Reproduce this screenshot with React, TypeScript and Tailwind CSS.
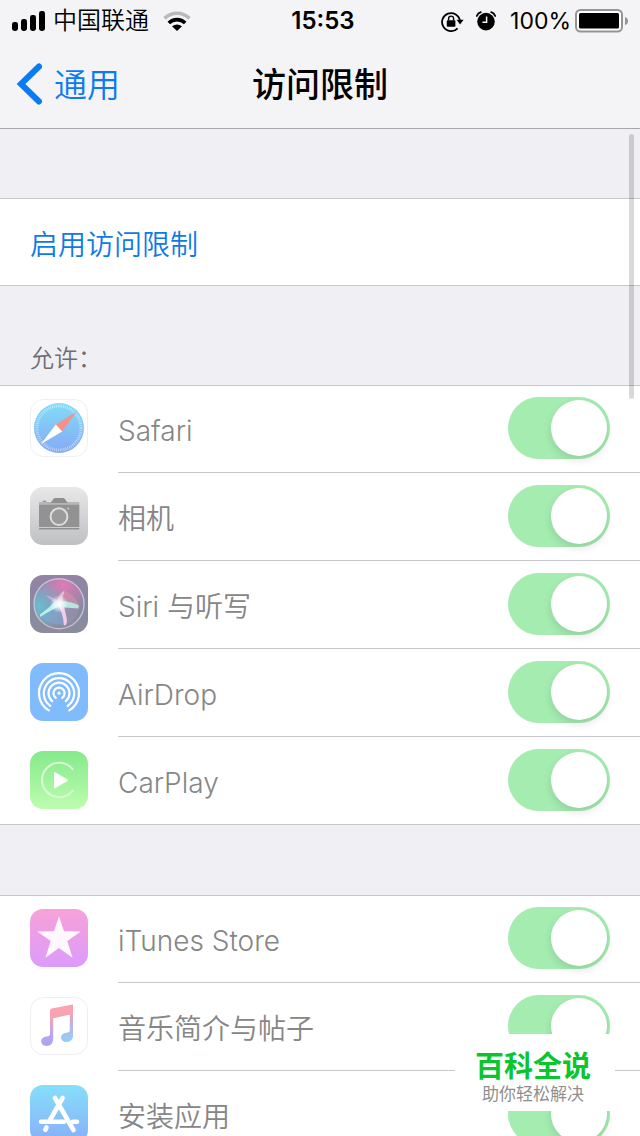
import React from 'react';

interface SettingItem {
  id: string;
  label: string;
  icon: React.ReactNode;
}

const SafariIcon = () => (
  <svg viewBox="0 0 58 58" className="w-full h-full" aria-hidden="true">
    <defs>
      <linearGradient id="safari" x1="0" y1="0" x2="0" y2="1">
        <stop offset="0" stopColor="#82dcf6" />
        <stop offset="1" stopColor="#86a9f6" />
      </linearGradient>
    </defs>
    <rect x="0.5" y="0.5" width="57" height="57" rx="13" fill="#fff" stroke="#f0efef" />
    <circle cx="29" cy="29" r="25" fill="url(#safari)" />
    <circle cx="29" cy="29" r="22" fill="none" stroke="#fff" strokeOpacity="0.6" strokeWidth="3" strokeDasharray="0.7 1.22" />
    <path d="M46.4 13 25.8 25.4 32.2 32.4Z" fill="#f3918a" />
    <path d="M11 45 25.8 25.4 32.2 32.4Z" fill="#fff" />
  </svg>
);

const CameraIcon = () => (
  <svg viewBox="0 0 58 58" className="w-full h-full" aria-hidden="true">
    <defs>
      <linearGradient id="camera" x1="0" y1="0" x2="0" y2="1">
        <stop offset="0" stopColor="#e8e8e9" />
        <stop offset="1" stopColor="#bfc0c2" />
      </linearGradient>
    </defs>
    <rect width="58" height="58" rx="13" fill="url(#camera)" />
    <path d="M9 16.5V15.6H21L23.3 12Q24 11 25.2 11H33Q34.2 11 34.9 12L37.5 15.6H49.3V16.5Z" fill="#8f8f90" />
    <rect x="12.8" y="13.7" width="3.6" height="1.2" rx="0.5" fill="#8f8f90" />
    <rect x="9" y="17.4" width="40.3" height="22.6" fill="#929293" />
    <rect x="9" y="41" width="40.3" height="1.6" rx="0.4" fill="#8f8f90" />
    <circle cx="29" cy="29.7" r="8.4" fill="#9b9b9c" stroke="#dededf" strokeWidth="2" />
    <circle cx="38.2" cy="21.5" r="1" fill="#cfcfd0" />
  </svg>
);

const SiriIcon = () => (
  <svg viewBox="0 0 58 58" className="w-full h-full" aria-hidden="true">
    <defs>
      <linearGradient id="siri" x1="0" y1="0" x2="0" y2="1">
        <stop offset="0" stopColor="#9582a4" />
        <stop offset="0.5" stopColor="#848aa2" />
        <stop offset="1" stopColor="#8c8d9a" />
      </linearGradient>
      <radialGradient id="siriPink" cx="0.6" cy="0.12" r="0.6">
        <stop offset="0" stopColor="#dc7cb6" />
        <stop offset="1" stopColor="#dc7cb6" stopOpacity="0" />
      </radialGradient>
      <radialGradient id="siriTeal" cx="0.1" cy="0.55" r="0.55">
        <stop offset="0" stopColor="#6cbdd2" />
        <stop offset="1" stopColor="#6cbdd2" stopOpacity="0" />
      </radialGradient>
      <radialGradient id="siriGlow">
        <stop offset="0" stopColor="#fff" />
        <stop offset="0.4" stopColor="#fff" stopOpacity="0.7" />
        <stop offset="1" stopColor="#fff" stopOpacity="0" />
      </radialGradient>
    </defs>
    <rect width="58" height="58" rx="13" fill="url(#siri)" />
    <circle cx="29" cy="28.7" r="25" fill="url(#siriPink)" />
    <circle cx="29" cy="28.7" r="25" fill="url(#siriTeal)" />
    <path d="M29 28 33 16Q44 18 49 30Z" fill="#e39aa8" fillOpacity="0.4" />
    <path d="M29 29 10 41Q18 50 35 50Z" fill="#82a8d8" fillOpacity="0.55" />
    <path d="M31 30 49 33Q47 45 36 50Z" fill="#a596bd" fillOpacity="0.35" />
    <path d="M10 39.5Q19 33 26 25.5L32 30Q22 34.5 10 42Z" fill="#b5f2ec" />
    <path d="M27 29Q33 37 34 50.5Q37.6 50 36.8 44Q35.4 35 32.5 29Z" fill="#efcbe8" />
    <path d="M28 26Q40 25.5 49 30.5L48.4 33.5Q38 32.5 29 32Z" fill="#b4e6dd" />
    <path d="M26.5 29Q28 19 34.5 15.5Q32.5 22 32.5 29Z" fill="#e8c4dc" fillOpacity="0.85" />
    <path d="M30 28Q23 21 15.5 20.5Q21 24 27 31Z" fill="#d6bcdf" fillOpacity="0.7" />
    <circle cx="29" cy="29" r="9" fill="url(#siriGlow)" />
    <circle cx="29" cy="28.7" r="25" fill="none" stroke="#c9bdd6" strokeWidth="1.4" />
  </svg>
);

const AirDropIcon = () => (
  <svg viewBox="0 0 58 58" className="w-full h-full" aria-hidden="true">
    <rect width="58" height="58" rx="13" fill="#80bbfd" />
    <g fill="none" stroke="#fff" strokeWidth="2.2" strokeLinecap="round">
      <path d="M18.8 47.4A20 20 0 1 1 39.2 47.4" />
      <path d="M20.3 42.8A15.2 15.2 0 1 1 37.7 42.8" />
      <path d="M22.2 38.2A10.5 10.5 0 1 1 35.8 38.2" />
      <path d="M25.8 34.9A5.6 5.6 0 1 1 32.2 34.9" />
    </g>
    <circle cx="29" cy="30.2" r="1.6" fill="#fff" />
  </svg>
);

const CarPlayIcon = () => (
  <svg viewBox="0 0 58 58" className="w-full h-full" aria-hidden="true">
    <defs>
      <linearGradient id="carplay" x1="0" y1="0" x2="0" y2="1">
        <stop offset="0" stopColor="#85e98b" />
        <stop offset="1" stopColor="#bdfdaf" />
      </linearGradient>
    </defs>
    <rect width="58" height="58" rx="13" fill="url(#carplay)" />
    <path d="M42.6 18.2A17.2 17.2 0 1 0 42.6 39.8" fill="none" stroke="#dcfad9" strokeWidth="2" strokeLinecap="round" />
    <path d="M24 21.2V37.2Q24 37.8 24.6 37.5L37.5 30Q38.6 29.2 37.5 28.5L24.6 20.9Q24 20.6 24 21.2Z" fill="#fff" />
  </svg>
);

const ITunesIcon = () => (
  <svg viewBox="0 0 58 58" className="w-full h-full" aria-hidden="true">
    <defs>
      <linearGradient id="itunes" x1="0" y1="0" x2="0" y2="1">
        <stop offset="0" stopColor="#f7a2d8" />
        <stop offset="1" stopColor="#dc9bfb" />
      </linearGradient>
    </defs>
    <rect width="58" height="58" rx="13" fill="url(#itunes)" />
    <path d="M29 7.2 34 22.3 50.8 22.4 37.3 32 42.6 48.8 29 38.9 15.4 48.8 20.7 32 7.2 22.4 24 22.3Z" fill="#fff" fillOpacity="0.92" />
  </svg>
);

const MusicIcon = () => (
  <svg viewBox="0 0 58 58" className="w-full h-full" aria-hidden="true">
    <defs>
      <linearGradient id="music" x1="0" y1="0" x2="0" y2="1">
        <stop offset="0.1" stopColor="#fba3b0" />
        <stop offset="0.35" stopColor="#f5a2b6" />
        <stop offset="0.7" stopColor="#b9a8ea" />
        <stop offset="1" stopColor="#aba3f5" />
      </linearGradient>
      <linearGradient id="musicRight" x1="0" y1="0" x2="0" y2="1">
        <stop offset="0.1" stopColor="#fba3b0" />
        <stop offset="0.5" stopColor="#c2b0e0" />
        <stop offset="1" stopColor="#93d0f8" />
      </linearGradient>
    </defs>
    <rect x="0.5" y="0.5" width="57" height="57" rx="13" fill="#fff" stroke="#f1ecf1" />
    <path d="M39.5 8.2 43 7.6V38.5C43 42.5 40.5 45 36.4 45C33.3 45 31 43 31 40.4C31 37.5 33.2 36 36.2 35.7C38.8 35.4 39.8 35 39.8 33V16Z" fill="url(#musicRight)" />
    <path d="M20 13.2Q20 11.8 21.5 11.4L41.5 7.7Q43 7.5 43 8.8V17L23.2 21.2V41.5C23.2 46 20.8 49 16.5 49C13.3 49 11.2 47 11.2 44.3C11.2 41.4 13.4 39.9 16.3 39.6C19 39.3 20 38.9 20 36.8Z" fill="url(#music)" />
  </svg>
);

const AppStoreIcon = () => (
  <svg viewBox="0 0 58 58" className="w-full h-full" aria-hidden="true">
    <defs>
      <linearGradient id="appstore" x1="0" y1="0" x2="0" y2="1">
        <stop offset="0" stopColor="#86dffa" />
        <stop offset="1" stopColor="#88aef8" />
      </linearGradient>
    </defs>
    <rect width="58" height="58" rx="13" fill="url(#appstore)" />
    <g fill="none" stroke="#fff" strokeWidth="4.6" strokeLinecap="round">
      <path d="M11 36.7H34M43 36.7H47" />
      <path d="M32.6 13 20 35" />
      <path d="M25 13 43.5 45" />
      <path d="M16.5 42.5 15.2 44.8" />
    </g>
  </svg>
);

const allowItems: SettingItem[] = [
  { id: 'safari-row', label: 'Safari', icon: <SafariIcon /> },
  { id: 'camera-row', label: '相机', icon: <CameraIcon /> },
  { id: 'siri-row', label: 'Siri 与听写', icon: <SiriIcon /> },
  { id: 'airdrop-row', label: 'AirDrop', icon: <AirDropIcon /> },
  { id: 'carplay-row', label: 'CarPlay', icon: <CarPlayIcon /> },
];

const storeItems: SettingItem[] = [
  { id: 'itunes-row', label: 'iTunes Store', icon: <ITunesIcon /> },
  { id: 'music-row', label: '音乐简介与帖子', icon: <MusicIcon /> },
  { id: 'install-row', label: '安装应用', icon: <AppStoreIcon /> },
];

const SettingList: React.FC<{ items: SettingItem[] }> = ({ items }) => (
  <ul className="bg-white shadow-[inset_0_1px_0_#c8c7cc,inset_0_-1px_0_#c8c7cc]">
    {items.map((item) => (
      <li key={item.id} className="group flex h-22 pl-[30px]">
        <div className="mt-3.5 mr-[30px] h-[58px] w-[58px] shrink-0">{item.icon}</div>
        <div className="flex flex-1 items-center justify-between border-b border-[#c8c7cc] pr-[30px] pb-px group-last:border-transparent">
          <label htmlFor={item.id} className="pt-1.5 text-[28px] leading-9 font-[350] text-[#868686]">
            {item.label}
          </label>
          <input
            id={item.id}
            type="checkbox"
            role="switch"
            defaultChecked
            disabled
            className="relative h-[62px] w-[102px] shrink-0 appearance-none rounded-full bg-[#a5ecb1] before:absolute before:top-[3px] before:right-[3px] before:h-14 before:w-14 before:rounded-full before:bg-white before:shadow-[0_4px_8px_rgba(0,0,0,0.12)]"
          />
        </div>
      </li>
    ))}
  </ul>
);

const StatusBar = () => (
  <div className="grid h-10 grid-cols-[1fr_auto_1fr] items-center px-3 pt-0.5 text-2xl leading-8 text-black">
    <div className="flex items-center gap-2">
      <svg viewBox="0 0 33 20" className="h-5 w-[33px]" aria-hidden="true">
        <rect x="0" y="11" width="6" height="9" rx="2.4" />
        <rect x="9" y="8" width="6" height="12" rx="2.4" />
        <rect x="18" y="4" width="6" height="16" rx="2.4" />
        <rect x="27" y="0" width="6" height="20" rx="2.4" />
      </svg>
      <span className="font-[350]">中国联通</span>
      <svg viewBox="0 0 28 20" className="ml-1.5 h-5 w-7" aria-hidden="true">
        <path d="M1.6 7.4A17.6 17.6 0 0 1 26.4 7.4" fill="none" stroke="#b9b9bb" strokeWidth="3.6" />
        <path d="M5.8 12A11.6 11.6 0 0 1 22.2 12" fill="none" stroke="#000" strokeWidth="3.6" />
        <path d="M14 20 9 15.3Q14 11.6 19 15.3Z" fill="#000" />
      </svg>
    </div>
    <span className="pl-1.5 font-semibold">15:53</span>
    <div className="flex items-center justify-end">
      <svg viewBox="0 0 23 21" className="mr-3 h-[21px] w-[23px]" aria-hidden="true">
        <path d="M16.6 17.3A9 9 0 1 1 19 10" fill="none" stroke="#000" strokeWidth="1.8" />
        <path d="M15.6 8.8H22.6L19.1 13.4Z" />
        <rect x="5.8" y="9.2" width="8.6" height="6.6" rx="0.8" />
        <path d="M7.6 9.6V7.6A2.5 2.5 0 0 1 12.6 7.6V9.6" fill="none" stroke="#000" strokeWidth="1.4" />
      </svg>
      <svg viewBox="0 0 20 20" className="mr-3.5 h-5 w-5" aria-hidden="true">
        <circle cx="10" cy="10.6" r="8.8" />
        <path d="M0.8 5A6 6 0 0 1 4.8 1.2M19.2 5A6 6 0 0 0 15.2 1.2" fill="none" stroke="#000" strokeWidth="1.8" strokeLinecap="round" />
        <path d="M10.6 5.4V11.2H6.4" fill="none" stroke="#f4f4f6" strokeWidth="1.5" />
      </svg>
      <span className="mr-1 text-[23px]">100%</span>
      <svg viewBox="0 0 53 24" className="h-6 w-[53px]" aria-hidden="true">
        <rect x="1" y="1" width="46" height="21.5" rx="4.5" fill="#fff" stroke="#949496" strokeWidth="2" />
        <rect x="4" y="4" width="40" height="15.5" rx="1.5" />
        <path d="M50 8Q53 9 53 12T50 16Z" fill="#949496" />
      </svg>
    </div>
  </div>
);

const App: React.FC = () => {
  return (
    <div className="relative flex h-screen flex-col overflow-hidden bg-[#efeff4] font-[Inter,'Noto_Sans_CJK_SC',sans-serif]">
      <header className="shrink-0 border-b border-[#a7a7ac] bg-[#f4f4f6]">
        <StatusBar />
        <nav className="grid h-22 grid-cols-[1fr_auto_1fr] items-center px-4">
          <a href="#general" className="flex items-center gap-3 text-[33px] leading-10 text-[#0a7bf2]">
            <svg viewBox="0 0 26 42" className="h-[42px] w-[26px]" aria-hidden="true">
              <path d="M23 3.5 5 21 23 38.5" fill="none" stroke="currentColor" strokeWidth="6" strokeLinecap="round" />
            </svg>
            <span className="pt-0.5 font-[350]">通用</span>
          </a>
          <h1 className="pt-0.5 text-[34px] leading-10 font-medium text-black">访问限制</h1>
        </nav>
      </header>

      <main className="min-h-0 flex-1 overflow-hidden">
        <div className="mt-[69px] border-y border-[#c8c7cc] bg-white">
          <button type="button" className="flex h-[86px] w-full items-center px-[30px] pt-1.5 text-[28px] font-[350] text-[#0f7ae5]">
            启用访问限制
          </button>
        </div>
        <h2 className="flex h-[99px] items-end px-[30px] pb-2.5 text-2xl leading-8 font-[350] text-[#6d6d72]">允许：</h2>
        <SettingList items={allowItems} />
        <div className="h-[70px]" />
        <SettingList items={storeItems} />
      </main>

      <div className="absolute top-[134px] right-1.5 h-[265px] w-[5px] rounded-full bg-black/15" />

      <div className="absolute right-[25px] bottom-[25px] flex h-[77px] w-40 flex-col items-center justify-center bg-white pt-2.5 pr-1">
        <span className="text-[29px] leading-8 font-bold text-[#0bc52f]">百科全说</span>
        <span className="text-[17px] leading-[22px] text-[#8f8f8f]">助你轻松解决</span>
      </div>
    </div>
  );
};

export default App;
